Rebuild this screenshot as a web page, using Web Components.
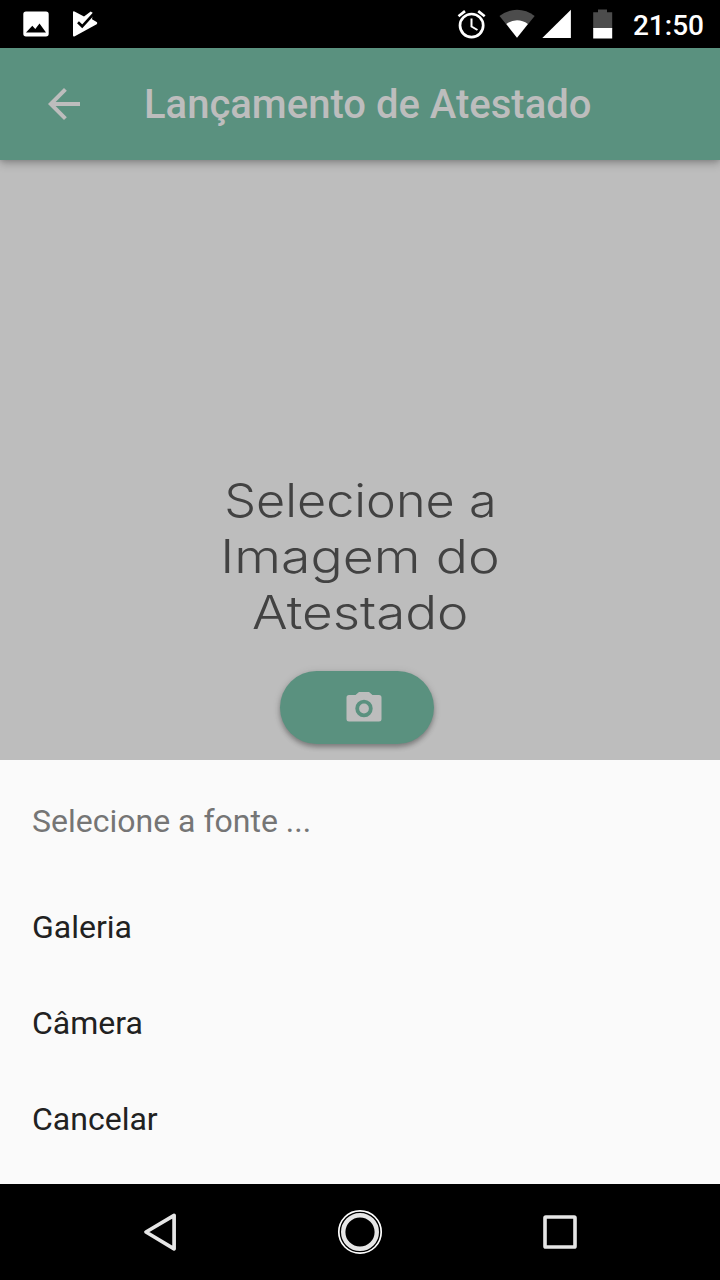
<!DOCTYPE html>
<html lang="pt-BR">
<head>
<meta charset="utf-8">
<title>Lançamento de Atestado</title>
<style>
html,body{margin:0;height:1280px;overflow:hidden;background:#bdbdbd;font-family:Roboto,"Liberation Sans",sans-serif}
</style>
</head>
<body>
<phone-screen>
  <status-bar slot="status">21:50</status-bar>
  <app-bar slot="bar">Lançamento de Atestado</app-bar>
  <upload-prompt slot="content">
    <prompt-line style="--s:1.095">Selecione a</prompt-line>
    <prompt-line style="--s:1.165">Imagem do</prompt-line>
    <prompt-line style="--s:1.15">Atestado</prompt-line>
    <camera-button slot="action"></camera-button>
  </upload-prompt>
  <action-sheet slot="sheet">
    <span slot="title">Selecione a fonte ...</span>
    <sheet-item>Galeria</sheet-item>
    <sheet-item>Câmera</sheet-item>
    <sheet-item>Cancelar</sheet-item>
  </action-sheet>
  <nav-bar slot="nav"></nav-bar>
</phone-screen>
<script>
function component(name, html) {
  const t = document.createElement('template');
  t.innerHTML = html;
  customElements.define(name, class extends HTMLElement {
    constructor() {
      super();
      this.attachShadow({mode: 'open'}).append(t.content.cloneNode(true));
    }
  });
}

component('phone-screen', `
<style>
:host{display:grid;grid-template-rows:48px 112px 600px 424px 96px;width:720px;height:1280px;background:#bdbdbd}
</style>
<slot name="status"></slot><slot name="bar"></slot><slot name="content"></slot><slot name="sheet"></slot><slot name="nav"></slot>`);

component('status-bar', `
<style>
:host{display:flex;align-items:center;background:#000;color:#fff;padding:0 16px 0 22px;box-sizing:border-box;z-index:2}
svg{display:block;flex:none}
.left{display:flex;gap:22px;flex:1}
.right{display:flex;align-items:center}
.time{font-size:28px;line-height:48px;font-weight:500;margin-left:19px;padding-top:2px;height:46px}
</style>
<div class="left">
<svg width="28" height="48" viewBox="22 0 28 48"><path fill="#fff" fill-rule="evenodd" d="M26 11.500h20q2.700 0 2.700 2.700v19.600q0 2.700-2.700 2.700H26q-2.700 0-2.700-2.700V14.200q0-2.700 2.700-2.700zM26 32.600h20l-6.500-9.100-4.200 5.600-3-3.300z"/></svg>
<svg width="28" height="48" viewBox="72 0 28 48"><path fill="#fff" d="M73 12.300q0-1.600 1.500-.9l9.500 5 6.700-4.900 2.300 1.500-1 6.300 4.700 2.700q1.300 1.100 0 2.200L74.800 36.300q-1.800.8-1.800-1z"/><path fill="none" stroke="#000" stroke-width="2.700" d="M78 22.300l4.200 4L93.800 13.700"/></svg>
</div>
<div class="right">
<svg width="42" height="48" viewBox="457 0 42 48"><g fill="none" stroke="#fff"><circle cx="471.600" cy="25.600" r="11.600" stroke-width="2.700"/><path stroke-width="2.700" d="M458.500 16.200l6.500-5.100M478.200 11.100l6.500 5.100"/><path stroke-width="2" d="M471.500 18.500v8l6 3.500"/></g></svg>
<svg width="42" height="48" viewBox="499 0 42 48"><path fill="#4c4c4c" d="M499.500 16Q507.500 9.800 517 9.800T534.700 16L517 37.800z"/><path fill="#fff" d="M506.300 24Q511.200 20.300 517 20.300T527.900 24L517 37.800z"/></svg>
<svg width="51" height="48" viewBox="541 0 51 48"><path fill="#fff" d="M542.300 38H570.900V9.800z"/></svg>
<svg width="22" height="48" viewBox="592 0 22 48"><path fill="#4c4c4c" d="M598 9.600h9v2.600h5.200V29h-19V12.200h4.800z"/><path fill="#fff" d="M593.200 28h19v10.500h-19z"/></svg>
<div class="time"><slot></slot></div>
</div>`);

component('app-bar', `
<style>
:host{display:flex;align-items:center;background:#5a917f;color:#bdbdbd;padding-left:40px;box-sizing:border-box;box-shadow:0 3px 9px rgba(0,0,0,.27),0 1px 4px rgba(0,0,0,.1);z-index:1}
svg{display:block;margin-right:56px}
.t{font-size:40px;font-weight:500;line-height:48px;padding-top:2px;white-space:nowrap}
</style>
<svg width="48" height="48" viewBox="0 0 24 24"><path fill="#bdbdbd" d="M20 11H7.830l5.590-5.590L12 4l-8 8 8 8 1.410-1.410L7.830 13H20v-2z"/></svg>
<div class="t"><slot></slot></div>`);

component('upload-prompt', `
<style>
:host{display:flex;flex-direction:column;align-items:center;justify-content:flex-end;padding-bottom:16px;box-sizing:border-box;color:#424242;font-family:Inter,sans-serif}
.action{padding:31px 6px 0 0}
</style>
<slot></slot><div class="action"><slot name="action"></slot></div>`);

component('prompt-line', `
<style>
:host{display:block;font-size:46px;font-weight:330;line-height:56px;height:56px;white-space:nowrap;transform:scaleX(var(--s))}
</style><slot></slot>`);

component('camera-button', `
<style>
:host{display:flex;align-items:center;justify-content:center;width:154px;height:73px;border-radius:37px;background:#5a917f;padding:0 0 2px 14px;box-sizing:border-box;box-shadow:0 3px 5px rgba(0,0,0,.3),0 1px 8px rgba(0,0,0,.1)}
svg{display:block}
</style>
<svg width="36" height="30" viewBox="0 0 36 30"><path fill="#bdbdbd" d="M13 0h10l3.500 3H33q2.500 0 2.500 2.500V27q0 2.500-2.500 2.500H3Q.5 29.500.5 27V5.500Q.5 3 3 3h6.500z"/><circle cx="18" cy="16.500" r="6.800" fill="#bdbdbd" stroke="#5a917f" stroke-width="3.800"/></svg>`);

component('action-sheet', `
<style>
:host{display:flex;flex-direction:column;background:#fafafa;padding:32px 32px 0;box-sizing:border-box;font-size:32px;color:#212121;z-index:2}
.title{height:58px;line-height:58px;color:#757575;margin-bottom:29px}
</style>
<div class="title"><slot name="title"></slot></div><slot></slot>`);

component('sheet-item', `
<style>:host{display:flex;align-items:center;height:96px}</style><slot></slot>`);

component('nav-bar', `
<style>
:host{display:flex;justify-content:center;align-items:center;gap:152px;background:#000}
svg{display:block}
</style>
<svg width="48" height="48" viewBox="0 0 48 48"><path fill="none" stroke="#e6e6e6" stroke-width="3.700" stroke-linejoin="round" d="M38.100 7.300L10 24l28.100 16.800z"/></svg>
<svg width="48" height="48" viewBox="0 0 48 48" fill="none"><circle cx="24" cy="24" r="21.200" stroke="#fff" stroke-width="1.700"/><circle cx="24" cy="24" r="16.800" stroke="#e6e6e6" stroke-width="4.400"/></svg>
<svg width="48" height="48" viewBox="0 0 48 48"><rect x="9" y="9" width="30" height="30" rx=".8" fill="none" stroke="#e6e6e6" stroke-width="3.600"/></svg>`);
</script>
</body>
</html>
